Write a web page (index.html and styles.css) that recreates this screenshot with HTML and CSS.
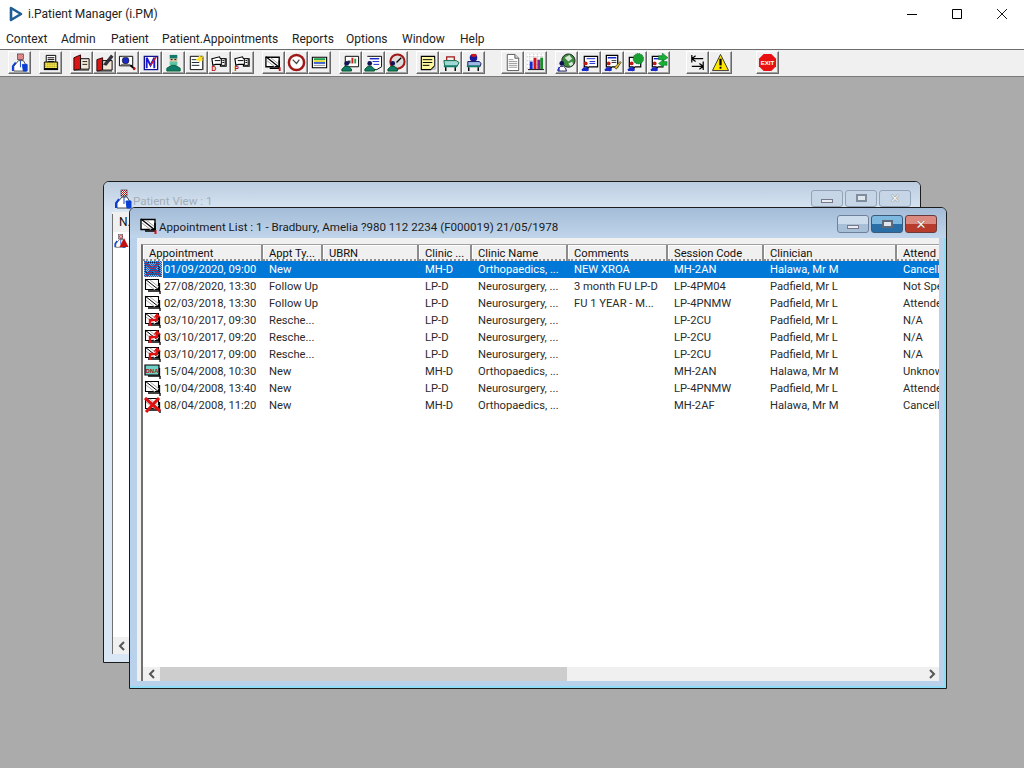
FILE: index.html
```html
<!DOCTYPE html>
<html lang="en">
<head>
<meta charset="utf-8">
<title>i.Patient Manager (i.PM)</title>
<link rel="stylesheet" href="styles.css">
</head>
<body>
<svg class="defs" width="0" height="0">
<defs>
<pattern id="chk" width="2" height="2" patternUnits="userSpaceOnUse"><rect width="1" height="1" fill="#c01010"/><rect x="1" y="1" width="1" height="1" fill="#c01010"/><rect x="1" width="1" height="1" fill="#fff"/><rect y="1" width="1" height="1" fill="#fff"/></pattern>
<pattern id="dith" width="2" height="2" patternUnits="userSpaceOnUse"><rect width="1" height="1" fill="#0078d7"/><rect x="1" y="1" width="1" height="1" fill="#0078d7"/></pattern>
<pattern id="ygrid" width="2" height="2" patternUnits="userSpaceOnUse"><rect width="2" height="2" fill="#ffe94d"/><rect width="1" height="1" fill="#7a7a10"/></pattern>

<symbol id="doctor" viewBox="0 0 20 20"><rect x="8" y="1" width="6" height="6" fill="url(#chk)" stroke="#223" stroke-width=".6"/><path d="M4 19v-5l5-6h5l3 5v6z" fill="#fff" stroke="#000" stroke-width=".7"/><path d="M3 19v-5l3-4" fill="none" stroke="#0a3fd0" stroke-width="2"/><path d="M11 8v7M13 12h5v7h-4z" fill="#0a3fd0" stroke="#0a3fd0"/></symbol>
<symbol id="printer" viewBox="0 0 20 20"><path d="M5.500 2.500h10v9h-10z" fill="#fff" stroke="#000"/><path d="M7 5h7M7 7h7M7 9h7" stroke="#000"/><path d="M3.500 9.500h14v7h-14z" fill="url(#ygrid)" stroke="#000"/><path d="M3 17h15" stroke="#000" stroke-width="2"/></symbol>
<symbol id="book" viewBox="0 0 20 20"><path d="M2 5l7-3v15l-7 1z" fill="#d81818" stroke="#300"/><path d="M9 6h9v11H9z" fill="#f3e8d8" stroke="#000"/><path d="M11 9h5M11 12h5M2 18h16" stroke="#222"/></symbol>
<symbol id="bookpen" viewBox="0 0 20 20"><path d="M2 7l6-2v13l-6 1z" fill="#d81818" stroke="#300"/><path d="M8 8h10v10H8z" fill="#f3e8d8" stroke="#000"/><path d="M9 12L17 2l2 2-7 9z" fill="#334" stroke="#000" stroke-width=".6"/><path d="M2 19h16" stroke="#222"/></symbol>
<symbol id="search" viewBox="0 0 20 20"><path d="M1.500 3.500h14v10h-14z" fill="#fff" stroke="#000"/><circle cx="8" cy="8" r="3.500" fill="#1a28c8" stroke="#000" stroke-width=".6"/><path d="M4 4h8M3 12h10" stroke="#666"/><path d="M13 13l5 4" stroke="#000" stroke-width="2"/><path d="M17 15v3" stroke="#c01010" stroke-width="2"/></symbol>
<symbol id="mcard" viewBox="0 0 20 20"><path d="M3.500 3.500h14v14h-14z" fill="#fff" stroke="#101090" stroke-width="1.400"/><path d="M6 16V5l4 8 4-8v11" fill="none" stroke="#1a1ad0" stroke-width="2"/><path d="M10 13l6-9" stroke="#d81818" stroke-width="1.500"/></symbol>
<symbol id="surgeon" viewBox="0 0 20 20"><path d="M6 2h8v4H6z" fill="#127a6a"/><path d="M6 6h8v6H6z" fill="#f0c8a0"/><path d="M6 9h8v4H6z" fill="#5fc4a8"/><path d="M7 7h2M11 7h2" stroke="#000"/><path d="M3 19v-3l5-3h4l5 3v3z" fill="#127a6a" stroke="#063"/></symbol>
<symbol id="notes" viewBox="0 0 20 20"><path d="M3.500 3.500h13v14h-13z" fill="#fff" stroke="#000"/><path d="M5 7h7M5 10h8M5 13h8" stroke="#123"/><path d="M13 1l1.500 3L18 3l-2 3 2 2-3.500 0L13 11l-1-3-3-1 3-2z" fill="#ffe020"/><path d="M17 4v14" stroke="#777"/></symbol>
<symbol id="tagD" viewBox="0 0 20 20"><path d="M2 6l8-2 1 2h6v8h-6v-2H6l-3 1z" fill="#fff" stroke="#000" stroke-width="1.200"/><path d="M12 6h4v7h-4z" fill="#fff" stroke="#000"/><path d="M5 8h6M13 8h2M13 10h2" stroke="#000"/><text x="1.500" y="19" class="micro">D</text></symbol>
<symbol id="tagP" viewBox="0 0 20 20"><path d="M2 6l8-2 1 2h6v8h-6v-2H6l-3 1z" fill="#fff" stroke="#000" stroke-width="1.200"/><path d="M12 6h4v7h-4z" fill="#fff" stroke="#000"/><path d="M5 8h6M13 8h2M13 10h2" stroke="#000"/><text x="1.500" y="19" class="micro">P</text></symbol>
<symbol id="envbig" viewBox="0 0 20 20"><path d="M2 4.500h14v10H2z" fill="#fff" stroke="#000" stroke-width="1.400"/><path d="M2 4l14 11" stroke="#000" stroke-width="1.300"/><path d="M3 8l9 7M7 5l9 7" stroke="#999"/><path d="M16 8v8H6" stroke="#000" stroke-width="1.600" fill="none"/><path d="M16.500 15v4" stroke="#d01010" stroke-width="2"/></symbol>
<symbol id="clock" viewBox="0 0 20 20"><circle cx="10" cy="10" r="8" fill="#fff" stroke="#a01818" stroke-width="2.600"/><path d="M6 7l4 4 3-4" fill="none" stroke="#444" stroke-width="1.300"/></symbol>
<symbol id="list" viewBox="0 0 20 20"><path d="M2.500 4.500h15v11h-15z" fill="#fff" stroke="#000" stroke-width="1.200"/><path d="M4 6.500h12" stroke="#20a050" stroke-width="2"/><path d="M4 8.500h12" stroke="#e0e040" stroke-width="2"/><path d="M4 10.500h12" stroke="#4060d0" stroke-width="2"/><path d="M4 13h12" stroke="#888"/></symbol>
<symbol id="screenman" viewBox="0 0 20 20"><path d="M4.500 3.500h14v11h-14z" fill="#fff" stroke="#000"/><path d="M11 5h2v6h-2z" fill="#d81818"/><path d="M14 6h2v5h-2z" fill="#20a050"/><path d="M7 8h3v3H7z" fill="#333"/><circle cx="6" cy="11" r="2.500" fill="#115"/><path d="M1 19v-2l3-3h4l3 3v2z" fill="#127a6a" stroke="#052"/></symbol>
<symbol id="formman" viewBox="0 0 20 20"><path d="M3.500 3.500h15v11l-5 3h-4" fill="#fff" stroke="#000"/><path d="M6 6h10" stroke="#1a28c8" stroke-width="1.500"/><path d="M9 9h7M10 12h6" stroke="#1a28c8"/><circle cx="6" cy="11" r="2.500" fill="#115"/><path d="M1 19v-2l3-3h4l3 3v2z" fill="#127a6a" stroke="#052"/></symbol>
<symbol id="clockman" viewBox="0 0 20 20"><circle cx="11" cy="9" r="7.500" fill="#ddd" stroke="#a01818" stroke-width="2.200"/><path d="M10 10l5-5" stroke="#000" stroke-width="1.300"/><circle cx="6" cy="11" r="2.500" fill="#115"/><path d="M1 19v-2l3-3h4l3 3v2z" fill="#127a6a" stroke="#052"/></symbol>
<symbol id="memo" viewBox="0 0 20 20"><path d="M3.500 3.500h14v10l-4 4h-10z" fill="#fff8a0" stroke="#000" stroke-width="1.200"/><path d="M5 7h10M5 10h10M5 13h7" stroke="#000"/><path d="M18 6v11h-4" stroke="#999" fill="none"/></symbol>
<symbol id="bed" viewBox="0 0 20 20"><path d="M6 8V4h8v4" fill="none" stroke="#a01818" stroke-width="1.300"/><path d="M3 8h13l3 2-2 4H4z" fill="#9fd8d4" stroke="#164"/><path d="M3 13h14v2H3z" fill="#127a6a"/><path d="M5 15v4M15 15v4" stroke="#000" stroke-width="1.500"/></symbol>
<symbol id="bedman" viewBox="0 0 20 20"><circle cx="10" cy="5" r="4" fill="#1a1a9a"/><path d="M8 1h5v3H8z" fill="#d01818"/><path d="M4 9h12l2 2-1 3H4z" fill="#9fb8e8" stroke="#115"/><path d="M3 13h14v2H3z" fill="#127a6a"/><path d="M5 15v4M15 15v4" stroke="#000" stroke-width="1.500"/></symbol>
<symbol id="page" viewBox="0 0 20 20"><path d="M4.500 1.500h8l4 4v13h-12z" fill="#fff" stroke="#555"/><path d="M12.500 1.500v4h4" fill="#ddd" stroke="#555"/><path d="M6 7h5M6 9h9M6 11h9M6 13h9M6 15h9" stroke="#999"/></symbol>
<symbol id="chart" viewBox="0 0 20 20"><path d="M1 1h18v18H1z" fill="#fff"/><path d="M1 4h18M1 8h18M1 12h18M1 16h18M4 1v18M8 1v18M12 1v18M16 1v18" stroke="#bbb" stroke-dasharray="1 1"/><path d="M4 9h3v8H4z" fill="#1a28c8"/><path d="M8 5h3v12H8z" fill="#d01818"/><path d="M12 7h3v10h-3z" fill="#8a1a9a"/><path d="M15 5h3v12h-3z" fill="#18902a"/><path d="M2 17.500h17" stroke="#000"/></symbol>
<symbol id="globe" viewBox="0 0 20 20"><circle cx="12" cy="8" r="7" fill="#3a8a3a" stroke="#222"/><path d="M8 5l5-3 3 4-4 3zM12 11l4-2 1 3-3 2z" fill="#d8e8d8"/><circle cx="5" cy="11" r="2.500" fill="#115"/><path d="M1 19v-2l3-3h3l2 2 1 3z" fill="#fff" stroke="#115"/><path d="M2 15v4" stroke="#1a28c8" stroke-width="1.500"/></symbol>
<symbol id="msg" viewBox="0 0 20 20"><path d="M4.500 3.500h14v11h-9l-2 3v-3h-3z" fill="#fff" stroke="#000" stroke-width="1.300"/><path d="M7 6h9" stroke="#1a28c8"/><path d="M10 9h6M10 11h6" stroke="#1a28c8"/><circle cx="6" cy="11" r="2" fill="#c01818"/><path d="M2 19v-2l2-2h3l2 2v2z" fill="#1a28c8"/></symbol>
<symbol id="msgpen" viewBox="0 0 20 20"><path d="M3.500 2.500h12v12h-6l-2 3v-3h-4z" fill="#fff" stroke="#000" stroke-width="1.300"/><path d="M5 5h9" stroke="#1a28c8" stroke-width="1.600"/><path d="M9 8h5M9 10h5" stroke="#333"/><circle cx="6" cy="11" r="2" fill="#c01818"/><path d="M2 19v-2l2-2h3l2 2v2z" fill="#1a28c8"/><path d="M12 15l6-6 1 1-5 7z" fill="#e0c020" stroke="#000" stroke-width=".6"/></symbol>
<symbol id="msggreen" viewBox="0 0 20 20"><path d="M3.500 4.500h12v10h-6l-2 3v-3h-4z" fill="#fff" stroke="#000" stroke-width="1.300"/><circle cx="13" cy="6" r="5.500" fill="#18a030" stroke="#063" stroke-dasharray="1 1"/><circle cx="6" cy="11" r="2" fill="#c01818"/><path d="M2 19v-2l2-2h3l2 2v2z" fill="#1a28c8"/></symbol>
<symbol id="msgarrow" viewBox="0 0 20 20"><path d="M3.500 3.500h11v11h-5l-2 3v-3h-4z" fill="#fff" stroke="#000" stroke-width="1.300"/><path d="M5 6h8" stroke="#1a28c8" stroke-width="1.500"/><path d="M10 3h4V0l6 5-6 4V7h-4z" fill="#18b030" stroke="#063" stroke-width=".5"/><path d="M19 9h-4V7l-5 4 5 4v-2h4z" fill="#18b030" stroke="#063" stroke-width=".5"/><circle cx="6" cy="11" r="2" fill="#c01818"/><path d="M2 19v-2l2-2h3l2 2v2z" fill="#1a28c8"/></symbol>
<symbol id="swap" viewBox="0 0 20 20"><path d="M4 2v8M4 6h12M4 6l4-3M4 6l4 3M16 9v9M16 14H4M16 14l-4-3M16 14l-4 3" fill="none" stroke="#000" stroke-width="1.300"/></symbol>
<symbol id="warn" viewBox="0 0 20 20"><path d="M10 1.500L18.500 18.500H1.500z" fill="#ffe600" stroke="#333"/><path d="M10 6v7" stroke="#000" stroke-width="2.400"/><path d="M10 14.500v2" stroke="#000" stroke-width="2"/></symbol>
<symbol id="exit" viewBox="0 0 20 20"><path d="M6 1h8l5 5v8l-5 5H6l-5-5V6z" fill="#e81010"/><text x="10" y="12.500" class="exit-text">EXIT</text></symbol>

<symbol id="env" viewBox="0 0 18 16"><path d="M1.500 1.500h13v10h-13z" fill="#fff" stroke="#000" stroke-width="1.100"/><path d="M1 1l14 11" stroke="#000"/><path d="M2 5l9 7M6 2l9 7" stroke="#aaa"/><path d="M15.500 5v8H4" fill="none" stroke="#000" stroke-width="1.300"/><path d="M16 13v3" stroke="#000" stroke-width="1.300"/></symbol>
<symbol id="envx" viewBox="0 0 18 16"><use href="#env"/><path d="M1 1l15 13M15 1L2 15" stroke="#e01010" stroke-width="3"/></symbol>
<symbol id="envr" viewBox="0 0 18 16"><use href="#env"/><path d="M6 14V8h7V5" fill="none" stroke="#e01010" stroke-width="2.400"/><path d="M9.500 5.500L13 1l4 4.500z" fill="#e01010"/></symbol>
<symbol id="envd" viewBox="0 0 18 16"><path d="M1 2h14v10H1z" fill="#6ed0c8" stroke="#000" stroke-width="1.200"/><text x="8" y="10" class="dna">DNA</text><path d="M15.500 5v8H4" fill="none" stroke="#000" stroke-width="1.300"/><path d="M16 13v3" stroke="#000" stroke-width="1.300"/></symbol>
<symbol id="envsel" viewBox="0 0 18 16"><use href="#envx"/><rect width="18" height="16" fill="url(#dith)"/><rect width="18" height="16" fill="#2a4aa8" opacity=".4"/></symbol>
</defs>
</svg>

<div class="app">
  <header class="titlebar">
    <div class="title">
      <svg class="appicon" viewBox="0 0 14 16"><path d="M2 2l10 6-10 6z" fill="#fff" stroke="#1f5f96" stroke-width="2.600" stroke-linejoin="round"/></svg>
      <span>i.Patient Manager (i.PM)</span>
    </div>
    <div class="sysbtns">
      <div class="sysbtn"><svg viewBox="0 0 10 10"><path d="M0 5.500h10" stroke="#000"/></svg></div>
      <div class="sysbtn"><svg viewBox="0 0 10 10"><path d="M.5.500h9v9h-9z" fill="none" stroke="#000"/></svg></div>
      <div class="sysbtn"><svg viewBox="0 0 10 10"><path d="M0 0l10 10M10 0L0 10" stroke="#000" stroke-width=".9"/></svg></div>
    </div>
  </header>

  <nav class="menubar">
    <span class="m-context">Context</span>
    <span class="m-admin">Admin</span>
    <span class="m-patient">Patient</span>
    <span class="m-appts">Patient.Appointments</span>
    <span class="m-reports">Reports</span>
    <span class="m-options">Options</span>
    <span class="m-window">Window</span>
    <span class="m-help">Help</span>
  </nav>

  <div class="toolbar">
    <div class="tgroup"><div class="tb"><svg><use href="#doctor"/></svg></div></div>
    <div class="tgroup"><div class="tb"><svg><use href="#printer"/></svg></div></div>
    <div class="tgroup">
      <div class="tb"><svg><use href="#book"/></svg></div>
      <div class="tb"><svg><use href="#bookpen"/></svg></div>
      <div class="tb"><svg><use href="#search"/></svg></div>
      <div class="tb"><svg><use href="#mcard"/></svg></div>
      <div class="tb"><svg><use href="#surgeon"/></svg></div>
      <div class="tb"><svg><use href="#notes"/></svg></div>
      <div class="tb"><svg><use href="#tagD"/></svg></div>
      <div class="tb"><svg><use href="#tagP"/></svg></div>
    </div>
    <div class="tgroup">
      <div class="tb"><svg><use href="#envbig"/></svg></div>
      <div class="tb"><svg><use href="#clock"/></svg></div>
      <div class="tb"><svg><use href="#list"/></svg></div>
    </div>
    <div class="tgroup">
      <div class="tb"><svg><use href="#screenman"/></svg></div>
      <div class="tb"><svg><use href="#formman"/></svg></div>
      <div class="tb"><svg><use href="#clockman"/></svg></div>
    </div>
    <div class="tgroup">
      <div class="tb"><svg><use href="#memo"/></svg></div>
      <div class="tb"><svg><use href="#bed"/></svg></div>
      <div class="tb"><svg><use href="#bedman"/></svg></div>
    </div>
    <div class="tgroup wide">
      <div class="tb"><svg><use href="#page"/></svg></div>
      <div class="tb"><svg><use href="#chart"/></svg></div>
    </div>
    <div class="tgroup">
      <div class="tb"><svg><use href="#globe"/></svg></div>
      <div class="tb"><svg><use href="#msg"/></svg></div>
      <div class="tb"><svg><use href="#msgpen"/></svg></div>
      <div class="tb"><svg><use href="#msggreen"/></svg></div>
      <div class="tb"><svg><use href="#msgarrow"/></svg></div>
    </div>
    <div class="tgroup wide">
      <div class="tb"><svg><use href="#swap"/></svg></div>
      <div class="tb"><svg><use href="#warn"/></svg></div>
    </div>
    <div class="tgroup wider"><div class="tb"><svg><use href="#exit"/></svg></div></div>
  </div>

  <main class="workspace">
    <section class="window inactive patient-win">
      <div class="wintitle">
        <svg class="winicon"><use href="#doctor"/></svg>
        <span class="wintext">Patient View : 1</span>
        <div class="winbtns">
          <div class="wbtn"><span class="g-min"></span></div>
          <div class="wbtn"><span class="g-max"></span></div>
          <div class="wbtn"><span class="g-close">✕</span></div>
        </div>
      </div>
      <div class="client patient-client">
        <div class="pv-list">
          <div class="pv-head">N.</div>
          <div class="pv-row">
            <svg class="pv-icon"><use href="#doctor"/></svg>
            <svg class="pv-warn" viewBox="0 0 10 10"><path d="M5 0l5 10H0z" fill="#c01010"/></svg>
          </div>
        </div>
        <div class="pv-scroll"><svg class="chev" viewBox="0 0 8 10"><path d="M6 1L2 5l4 4" fill="none" stroke="#555" stroke-width="2"/></svg></div>
      </div>
    </section>

    <section class="window active appt-win">
      <div class="wintitle">
        <svg class="winicon"><use href="#envbig"/></svg>
        <span class="wintext">Appointment List : 1 - Bradbury, Amelia ?980 112 2234 (F000019) 21/05/1978</span>
        <div class="winbtns">
          <div class="wbtn"><span class="g-min"></span></div>
          <div class="wbtn hot-blue"><span class="g-max"></span></div>
          <div class="wbtn hot-red"><span class="g-close">✕</span></div>
        </div>
      </div>
      <div class="client appt-client">
        <div class="listview">
          <table class="grid">
            <colgroup>
              <col class="c1"><col class="c2"><col class="c3"><col class="c4"><col class="c5"><col class="c6"><col class="c7"><col class="c8"><col class="c9">
            </colgroup>
            <thead>
              <tr><th>Appointment</th><th>Appt Ty...</th><th>UBRN</th><th>Clinic ...</th><th>Clinic Name</th><th>Comments</th><th>Session Code</th><th>Clinician</th><th>Attend ...</th></tr>
            </thead>
            <tbody>
              <tr class="sel"><td class="first"><svg class="ri"><use href="#envsel"/></svg><span class="dt">01/09/2020, 09:00</span></td><td>New</td><td></td><td>MH-D</td><td>Orthopaedics, ...</td><td>NEW XROA</td><td>MH-2AN</td><td>Halawa, Mr M</td><td>Cancelled</td></tr>
              <tr><td class="first"><svg class="ri"><use href="#env"/></svg><span class="dt">27/08/2020, 13:30</span></td><td>Follow Up</td><td></td><td>LP-D</td><td>Neurosurgery, ...</td><td>3 month FU LP-D</td><td>LP-4PM04</td><td>Padfield, Mr L</td><td>Not Specified</td></tr>
              <tr><td class="first"><svg class="ri"><use href="#env"/></svg><span class="dt">02/03/2018, 13:30</span></td><td>Follow Up</td><td></td><td>LP-D</td><td>Neurosurgery, ...</td><td>FU 1 YEAR - M...</td><td>LP-4PNMW</td><td>Padfield, Mr L</td><td>Attended</td></tr>
              <tr><td class="first"><svg class="ri"><use href="#envr"/></svg><span class="dt">03/10/2017, 09:30</span></td><td>Resche...</td><td></td><td>LP-D</td><td>Neurosurgery, ...</td><td></td><td>LP-2CU</td><td>Padfield, Mr L</td><td>N/A</td></tr>
              <tr><td class="first"><svg class="ri"><use href="#envr"/></svg><span class="dt">03/10/2017, 09:20</span></td><td>Resche...</td><td></td><td>LP-D</td><td>Neurosurgery, ...</td><td></td><td>LP-2CU</td><td>Padfield, Mr L</td><td>N/A</td></tr>
              <tr><td class="first"><svg class="ri"><use href="#envr"/></svg><span class="dt">03/10/2017, 09:00</span></td><td>Resche...</td><td></td><td>LP-D</td><td>Neurosurgery, ...</td><td></td><td>LP-2CU</td><td>Padfield, Mr L</td><td>N/A</td></tr>
              <tr><td class="first"><svg class="ri"><use href="#envd"/></svg><span class="dt">15/04/2008, 10:30</span></td><td>New</td><td></td><td>MH-D</td><td>Orthopaedics, ...</td><td></td><td>MH-2AN</td><td>Halawa, Mr M</td><td>Unknown</td></tr>
              <tr><td class="first"><svg class="ri"><use href="#env"/></svg><span class="dt">10/04/2008, 13:40</span></td><td>New</td><td></td><td>LP-D</td><td>Neurosurgery, ...</td><td></td><td>LP-4PNMW</td><td>Padfield, Mr L</td><td>Attended</td></tr>
              <tr><td class="first"><svg class="ri"><use href="#envx"/></svg><span class="dt">08/04/2008, 11:20</span></td><td>New</td><td></td><td>MH-D</td><td>Orthopaedics, ...</td><td></td><td>MH-2AF</td><td>Halawa, Mr M</td><td>Cancelled</td></tr>
            </tbody>
          </table>
        </div>
        <div class="hscroll">
          <div class="sb-arrow sb-left"><svg class="chev" viewBox="0 0 8 10"><path d="M6 1L2 5l4 4" fill="none" stroke="#555" stroke-width="2"/></svg></div>
          <div class="sb-track"><div class="sb-thumb"></div></div>
          <div class="sb-arrow sb-right"><svg class="chev" viewBox="0 0 8 10"><path d="M2 1l4 4-4 4" fill="none" stroke="#555" stroke-width="2"/></svg></div>
        </div>
      </div>
    </section>
  </main>
</div>
</body>
</html>
```
FILE: styles.css
```css
* { box-sizing: border-box; }
html, body { margin: 0; padding: 0; height: 100%; overflow: hidden; }
body { font-family: Roboto, "Noto Sans", sans-serif; font-size: 12px; color: #111; background: #fff; }
.defs { position: absolute; }
.micro { font: bold 7px "Liberation Sans", sans-serif; fill: #c01010; }
.exit-text { font: bold 6.500px "Liberation Sans", sans-serif; fill: #fff; text-anchor: middle; }
.dna { font: bold 6px "Liberation Sans", sans-serif; fill: #b01010; text-anchor: middle; }

.app { display: flex; flex-direction: column; width: 1024px; height: 768px; }

.titlebar { height: 28px; flex: none; display: flex; justify-content: space-between; background: #fff; }
.title { display: flex; align-items: center; padding-left: 9px; gap: 5px; font-size: 12px; color: #222; }
.appicon { width: 14px; height: 16px; }
.sysbtns { display: flex; }
.sysbtn { width: 45px; height: 28px; display: flex; align-items: center; justify-content: center; }
.sysbtn svg { width: 10px; height: 10px; }

.menubar { height: 21px; flex: none; display: flex; align-items: center; padding-left: 6px; background: #fff; color: #222; white-space: nowrap; }
.m-context { width: 55px; }
.m-admin { width: 50px; }
.m-patient { width: 51px; }
.m-appts { width: 130px; }
.m-reports { width: 54px; }
.m-options { width: 56px; }
.m-window { width: 58px; }

.toolbar { height: 28px; flex: none; display: flex; gap: 8px; padding: 1px 0 0 8px; background: #f0f0f0; border-top: 1px solid #6d6d6d; border-bottom: 1px solid #7a7a7a; }
.tgroup { display: flex; height: 23px; }
.tgroup.wide { margin-left: 8px; }
.tgroup.wider { margin-left: 16px; }
.tb { width: 23px; height: 23px; display: flex; align-items: center; justify-content: center; background: #f0f0f0; border: 1px solid; border-color: #fff #696969 #696969 #fff; box-shadow: inset -1px -1px 0 #a0a0a0; }
.tb svg { width: 19px; height: 19px; }

.workspace { flex: 1; position: relative; background: #ababab; overflow: hidden; }

.window { position: absolute; display: flex; flex-direction: column; width: 818px; height: 482px; border: 1px solid #1c1c1c; border-radius: 6px 6px 0 0; }
.patient-win { left: 103px; top: 104px; background: #d9e6f3; }
.appt-win { left: 129px; top: 130px; background: #b9d1ea; box-shadow: inset -2px -2px 0 #8fdcf4; }

.wintitle { height: 30px; flex: none; display: flex; align-items: center; padding: 4px 9px 0 9px; border-radius: 5px 5px 0 0; }
.active .wintitle { background: linear-gradient(#a4bcd8, #c0d5ea); }
.inactive .wintitle { background: linear-gradient(#bccde0, #d9e6f3); }
.winicon { width: 20px; height: 20px; flex: none; }
.wintext { flex: 1; white-space: nowrap; overflow: hidden; padding-top: 4px; font-size: 11.6px; }
.inactive .wintext { color: #a3adb8; }
.active .wintext { color: #1b1b1b; }

.winbtns { display: flex; gap: 2px; margin-top: -2px; }
.wbtn { width: 32px; height: 18px; display: flex; align-items: center; justify-content: center; border: 1px solid #6f819a; border-radius: 3px; background: linear-gradient(#cddcec 50%, #a8bfd8 50%); }
.inactive .wbtn { height: 17px; border-color: #92a3b8; background: #c6d6e6; }
.wbtn.hot-blue { background: linear-gradient(#7db8e0 50%, #2a6ea8 50%); border-color: #3a5a7a; }
.wbtn.hot-red { background: linear-gradient(#dc8a80 50%, #b83c2c 50%); border-color: #6a3a3a; }
.g-min { display: block; width: 12px; height: 4px; background: #e8eef4; border: 1px solid #778; margin-top: 5px; }
.g-max { display: block; width: 11px; height: 8px; background: #dfe6ee; border: 2px solid #5c6a7c; }
.inactive .g-max { border-color: #7f8d9d; }
.g-close { color: #f2f2f2; font: bold 13px/1 "DejaVu Sans", sans-serif; text-shadow: 0 0 1px #444; }
.inactive .g-close { color: #f0f4f8; }

.client { flex: 1; margin: 0 7px 7px 7px; display: flex; flex-direction: column; background: #f0f0f0; min-height: 0; }
.appt-client { padding: 6px 0 0 4px; }
.patient-client { padding: 2px 0 0 0; margin: 0 6px 8px 8px; }

.listview { flex: 1; overflow: hidden; background: #fff; border-left: 2px solid #707070; border-top: 1px solid #a0a0a0; min-height: 0; }
.grid { border-collapse: separate; border-spacing: 0; table-layout: fixed; width: 1200px; }
.c1 { width: 120px; } .c2 { width: 60px; } .c3 { width: 96px; } .c4 { width: 53px; } .c5 { width: 96px; } .c6 { width: 100px; } .c7 { width: 96px; } .c8 { width: 133px; } .c9 { width: 446px; }
.grid th { height: 16px; padding: 3px 0 0 6px; font-weight: 400; text-align: left; background: #f0f0f0; border-right: 2px solid #8c8c8c; border-bottom: 2px dotted #8f8f8f; box-shadow: inset 1px 1px 0 #fff; white-space: nowrap; overflow: hidden; line-height: 11px; color: #111; font-size: 11.2px; }
.grid td { height: 17px; padding: 0 0 0 6px; white-space: nowrap; overflow: hidden; line-height: 17px; font-size: 11.2px; color: #2b2b2b; }
.grid td.first { padding: 0 0 0 1px; }
.ri { width: 18px; height: 16px; display: inline-block; vertical-align: top; }
.dt { padding-left: 2px; padding-right: 4px; }
.sel td { background: #0078d7; color: #fff; }
.sel td.first { background: linear-gradient(to right, #fff 20px, #0078d7 20px); }
.sel .dt { color: #fff; }

.hscroll { flex: none; height: 14px; display: flex; background: #f0f0f0; border-left: 2px solid #707070; }
.sb-arrow { flex: none; display: flex; align-items: center; justify-content: center; background: #f0f0f0; }
.sb-left { width: 17px; }
.sb-right { width: 14px; }
.sb-track { flex: 1; background: #f0f0f0; }
.sb-thumb { width: 407px; height: 100%; background: #cdcdcd; }
.chev { width: 8px; height: 10px; }

.pv-list { flex: 1; background: #fff; border-left: 1px solid #707070; min-height: 0; }
.pv-head { height: 18px; background: #f0f0f0; padding-left: 6px; line-height: 17px; overflow: hidden; width: 18px; border-right: 1px solid #999; }
.pv-row { display: flex; position: relative; width: 17px; height: 20px; }
.pv-icon { width: 14px; height: 18px; }
.pv-warn { position: absolute; left: 6px; top: 6px; width: 10px; height: 9px; }
.pv-scroll { height: 17px; width: 18px; display: flex; align-items: center; justify-content: center; background: #f0f0f0; border-left: 1px solid #707070; }
```
